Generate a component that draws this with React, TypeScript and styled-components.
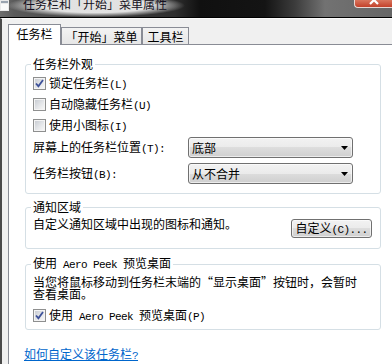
import React from "react";
import styled, { createGlobalStyle } from "styled-components";

const Global = createGlobalStyle`
  html, body { margin: 0; padding: 0; background: #f0f0f0; overflow: hidden; }
  body { font-family: "Noto Sans CJK SC", "Noto Sans", sans-serif; font-size: 12px; }
`;

const Window = styled.div`
  width: 392px;
  height: 364px;
  display: flex;
  flex-direction: column;
  overflow: hidden;
  font-family: "Noto Sans CJK SC", "Noto Sans", sans-serif;
  font-size: 12px;
  color: #000;
`;

const TitleBar = styled.div`
  flex: none;
  height: 17px;
  display: flex;
  align-items: flex-start;
  border-bottom: 1px solid #000;
  overflow: hidden;
  background: linear-gradient(
    90deg,
    #6d6d6d 0px,
    #5a5a5a 14px,
    #2e2e2e 175px,
    #101010 200px,
    #141414 265px,
    #3c3c3c 295px,
    #727272 325px,
    #666 392px
  );
`;

const AppIcon = styled.svg`
  flex: none;
  display: block;
`;

const TitleText = styled.span`
  flex: none;
  margin: -6px 0 0 -3px;
  padding: 3px 18px 6px 16px;
  line-height: 14px;
  color: #151020;
  white-space: nowrap;
  background: radial-gradient(
    ellipse closest-side,
    rgba(232, 232, 232, 0.96) 62%,
    rgba(232, 232, 232, 0) 100%
  );
`;

const CloseButton = styled.div`
  flex: none;
  margin-left: auto;
  width: 38px;
  height: 8px;
  box-sizing: border-box;
  border-left: 1px solid #e8d8d4;
  border-bottom: 1px solid #e8d8d4;
  border-bottom-left-radius: 4px;
  background: linear-gradient(#d9765e, #c3412a);
  display: flex;
  justify-content: center;
  overflow: hidden;
`;

const Body = styled.div`
  flex: 1;
  min-height: 0;
  display: flex;
  flex-direction: column;
  background: #f0f0f0;
  border-top: 1px solid #fafafa;
  border-left: 2px solid #4a4a4a;
  padding: 5px 0 0 6px;
`;

const TabList = styled.div`
  display: flex;
  align-items: flex-end;
`;

const Tab = styled.div<{ $active?: boolean; $w: number }>`
  position: relative;
  z-index: ${(p) => (p.$active ? 2 : 1)};
  box-sizing: border-box;
  width: ${(p) => p.$w}px;
  height: ${(p) => (p.$active ? 21 : 17)}px;
  margin-bottom: ${(p) => (p.$active ? -1 : 0)}px;
  padding-top: 2px;
  border: 1px solid #898c95;
  border-bottom: none;
  background: ${(p) =>
    p.$active ? "#fff" : "linear-gradient(#f3f3f3, #e6e6e6)"};
  line-height: 14px;
  text-align: center;
  white-space: nowrap;
`;

const Panel = styled.div`
  flex: 1;
  display: flex;
  flex-direction: column;
  background: #fff;
  border-top: 1px solid #898c95;
  border-left: 1px solid #898c95;
`;

const Group = styled.fieldset<{ $mt: number; $pt: number; $pb: number }>`
  margin: ${(p) => p.$mt}px 11px 0 16px;
  padding: ${(p) => p.$pt}px 8px ${(p) => p.$pb}px 7px;
  border: 1px solid #d5dfe5;
  border-radius: 3px;
  min-width: 0;
`;

const Legend = styled.legend`
  padding: 0 2px;
  margin-left: -2px;
  line-height: 14px;
  white-space: nowrap;
`;

const En = styled.span`
  font-family: "Liberation Mono", "DejaVu Sans Mono", monospace;
  font-size: 11px;
  letter-spacing: -0.6px;
`;

const CheckRow = styled.label<{ $mt?: number }>`
  display: flex;
  align-items: center;
  gap: 3px;
  height: 21px;
  margin-top: ${(p) => p.$mt ?? 0}px;
  line-height: 14px;
  white-space: nowrap;
`;

const BoxOuter = styled.span`
  flex: none;
  box-sizing: border-box;
  width: 13px;
  height: 13px;
  border: 1px solid #8e8f8f;
  padding: 1px;
  background: #f4f4f4;
  display: flex;
`;

const BoxInner = styled.span`
  flex: 1;
  background: linear-gradient(135deg, #c9cdd3 0%, #e4e6e9 55%, #f6f6f6 100%);
  display: flex;
  align-items: center;
  justify-content: center;
`;

const SelectStack = styled.div`
  display: flex;
  flex-direction: column;
  gap: 5px;
  margin-top: 1px;
`;

const SelectRow = styled.div`
  display: grid;
  grid-template-columns: 155px 165px;
  align-items: center;
  height: 21px;
  line-height: 14px;
  white-space: nowrap;
`;

const Select = styled.div`
  box-sizing: border-box;
  height: 21px;
  border: 1px solid #707070;
  border-radius: 3px;
  background: linear-gradient(#f2f2f2 0%, #ebebeb 50%, #dddddd 50%, #cfcfcf 100%);
  box-shadow: inset 0 0 0 1px rgba(255, 255, 255, 0.6);
  display: flex;
  align-items: center;
  justify-content: space-between;
  padding: 0 4px 0 3px;
  line-height: 14px;
`;

const NotifyRow = styled.div`
  display: flex;
  align-items: flex-start;
  justify-content: space-between;
  line-height: 14px;
  white-space: nowrap;
`;

const Button = styled.button`
  margin-top: 2px;
  width: 81px;
  height: 19px;
  box-sizing: border-box;
  padding: 0;
  border: 1px solid #707070;
  border-radius: 3px;
  background: linear-gradient(#f2f2f2 0%, #ebebeb 50%, #dddddd 50%, #cfcfcf 100%);
  box-shadow: inset 0 0 0 1px rgba(255, 255, 255, 0.6);
  font-family: inherit;
  font-size: 12px;
  line-height: 14px;
  color: #000;
  white-space: nowrap;
`;

const Para = styled.p`
  margin: 0;
  line-height: 12px;
  white-space: nowrap;
`;

const HelpLink = styled.a`
  align-self: flex-start;
  margin: 17px 0 0 15px;
  line-height: 14px;
  color: #0066cc;
  text-decoration: underline;
  white-space: nowrap;
`;

function Checkbox({ checked }: { checked?: boolean }) {
  return (
    <BoxOuter>
      <BoxInner>
        {checked && (
          <svg width="9" height="9" viewBox="0 0 9 9">
            <path
              d="M1 4.5 L3.4 7.2 L8 1"
              fill="none"
              stroke="#3d5199"
              strokeWidth="1.8"
            />
          </svg>
        )}
      </BoxInner>
    </BoxOuter>
  );
}

function Arrow() {
  return (
    <svg width="7" height="4" viewBox="0 0 7 4">
      <path d="M0 0 H7 L3.5 4 Z" fill="#000" />
    </svg>
  );
}

export default function App() {
  return (
    <>
      <Global />
      <Window>
        <TitleBar>
          <AppIcon width="10" height="12" viewBox="0 0 10 12">
            <rect x="0" y="0" width="9" height="11" fill="#e9e9e9" />
            <rect x="1" y="1" width="7" height="2" fill="#9aa4b0" />
            <rect x="1" y="4" width="7" height="6" fill="#fafafa" />
          </AppIcon>
          <TitleText>任务栏和「开始」菜单属性</TitleText>
          <CloseButton>
            <svg width="10" height="10" viewBox="0 0 10 10" style={{ marginTop: -5 }}>
              <path d="M1 1 L9 9 M9 1 L1 9" stroke="#fff" strokeWidth="2.2" />
            </svg>
          </CloseButton>
        </TitleBar>
        <Body>
          <TabList>
            <Tab $active $w={53}>任务栏</Tab>
            <Tab $w={81}>「开始」菜单</Tab>
            <Tab $w={47}>工具栏</Tab>
          </TabList>
          <Panel>
            <Group $mt={12} $pt={2} $pb={9}>
              <Legend>任务栏外观</Legend>
              <CheckRow>
                <Checkbox checked />
                <span>
                  锁定任务栏<En>(L)</En>
                </span>
              </CheckRow>
              <CheckRow>
                <Checkbox />
                <span>
                  自动隐藏任务栏<En>(U)</En>
                </span>
              </CheckRow>
              <CheckRow>
                <Checkbox />
                <span>
                  使用小图标<En>(I)</En>
                </span>
              </CheckRow>
              <SelectStack>
                <SelectRow>
                  <span>
                    屏幕上的任务栏位置<En>(T):</En>
                  </span>
                  <Select>
                    <span>底部</span>
                    <Arrow />
                  </Select>
                </SelectRow>
                <SelectRow>
                  <span>
                    任务栏按钮<En>(B):</En>
                  </span>
                  <Select>
                    <span>从不合并</span>
                    <Arrow />
                  </Select>
                </SelectRow>
              </SelectStack>
            </Group>
            <Group $mt={6} $pt={3} $pb={10}>
              <Legend>通知区域</Legend>
              <NotifyRow>
                <span>自定义通知区域中出现的图标和通知。</span>
                <Button>
                  自定义<En>(C)...</En>
                </Button>
              </NotifyRow>
            </Group>
            <Group $mt={7} $pt={4} $pb={3}>
              <Legend>
                使用<En> Aero Peek </En>预览桌面
              </Legend>
              <Para>
                当您将鼠标移动到任务栏末端的“显示桌面”按钮时，会暂时
                <br />
                查看桌面。
              </Para>
              <CheckRow $mt={5}>
                <Checkbox checked />
                <span>
                  使用<En> Aero Peek </En>预览桌面<En>(P)</En>
                </span>
              </CheckRow>
            </Group>
            <HelpLink href="#">
              如何自定义该任务栏<En>?</En>
            </HelpLink>
          </Panel>
        </Body>
      </Window>
    </>
  );
}
